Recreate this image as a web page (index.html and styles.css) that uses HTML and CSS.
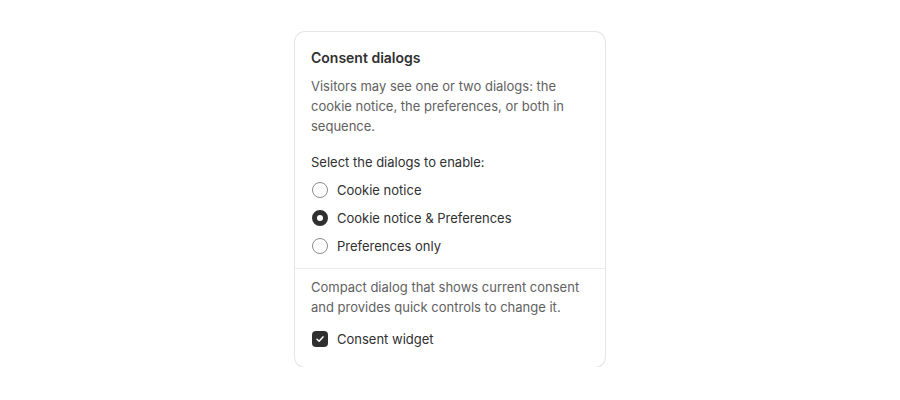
FILE: index.html
```
<!DOCTYPE html>
<html>
<head>
<meta name="viewport" content="width=device-width, initial-scale=1.0">
<title>Consent dialogs</title>
<link rel="stylesheet" href="styles.css">
</head>
<body>

<div class="card">
    <div class="section">
        <h2 class="title">Consent dialogs</h2>
        <p class="subdued">Visitors may see one or two dialogs: the cookie notice, the preferences, or both in sequence.</p>
        <div class="choice-list">
            <div class="legend">Select the dialogs to enable:</div>
            <label class="choice">
                <span class="radio"></span>
                <span>Cookie notice</span>
            </label>
            <label class="choice">
                <span class="radio checked"></span>
                <span>Cookie notice &amp; Preferences</span>
            </label>
            <label class="choice">
                <span class="radio"></span>
                <span>Preferences only</span>
            </label>
        </div>
    </div>
    <div class="section divided">
        <p class="subdued">Compact dialog that shows current consent and provides quick controls to change it.</p>
        <label class="choice">
            <span class="checkbox">
                <svg width="10" height="10" viewBox="0 0 10 10"><path d="M2 5.2 L4.1 7.2 L8 2.9" fill="none" stroke="#fff" stroke-width="1.5" stroke-linecap="round" stroke-linejoin="round"/></svg>
            </span>
            <span>Consent widget</span>
        </label>
    </div>
</div>

</body>
</html>
```

FILE: styles.css
```
body {
    margin: 0;
    font-family: Inter, "Noto Sans", sans-serif;
    font-size: 13px;
    line-height: 20px;
    color: #303030;
    background: #fff;
}
.card {
    width: 310px;
    margin: 32px auto 0;
    border-radius: 10px;
    background: #fff;
    box-shadow: 0 0 0 1px #e6e6e6, 0 1px 1px 0 rgba(0, 0, 0, 0.14);
    overflow: hidden;
}
.section {
    padding: 16px 16px 12px;
}
.section.divided {
    border-top: 1px solid #ebebeb;
    padding: 8px 16px 18px;
}
.title {
    margin: 0 0 8px;
    font-size: 14px;
    line-height: 20px;
    font-weight: 600;
}
p {
    margin: 0;
}
.subdued {
    color: #616161;
}
.choice-list {
    margin-top: 16px;
    display: flex;
    flex-direction: column;
    gap: 8px;
}
.choice {
    display: flex;
    align-items: center;
    gap: 9px;
    height: 20px;
}
.divided .choice {
    margin-top: 12px;
}
.radio {
    box-sizing: border-box;
    width: 16px;
    height: 16px;
    margin-left: 1px;
    border-radius: 50%;
    border: 1px solid #8a8a8a;
    background: #fff;
}
.radio.checked {
    border: 5.5px solid #303030;
}
.checkbox {
    box-sizing: border-box;
    width: 16px;
    height: 16px;
    margin-left: 1px;
    border-radius: 4px;
    background: #303030;
    display: flex;
    align-items: center;
    justify-content: center;
}
```
